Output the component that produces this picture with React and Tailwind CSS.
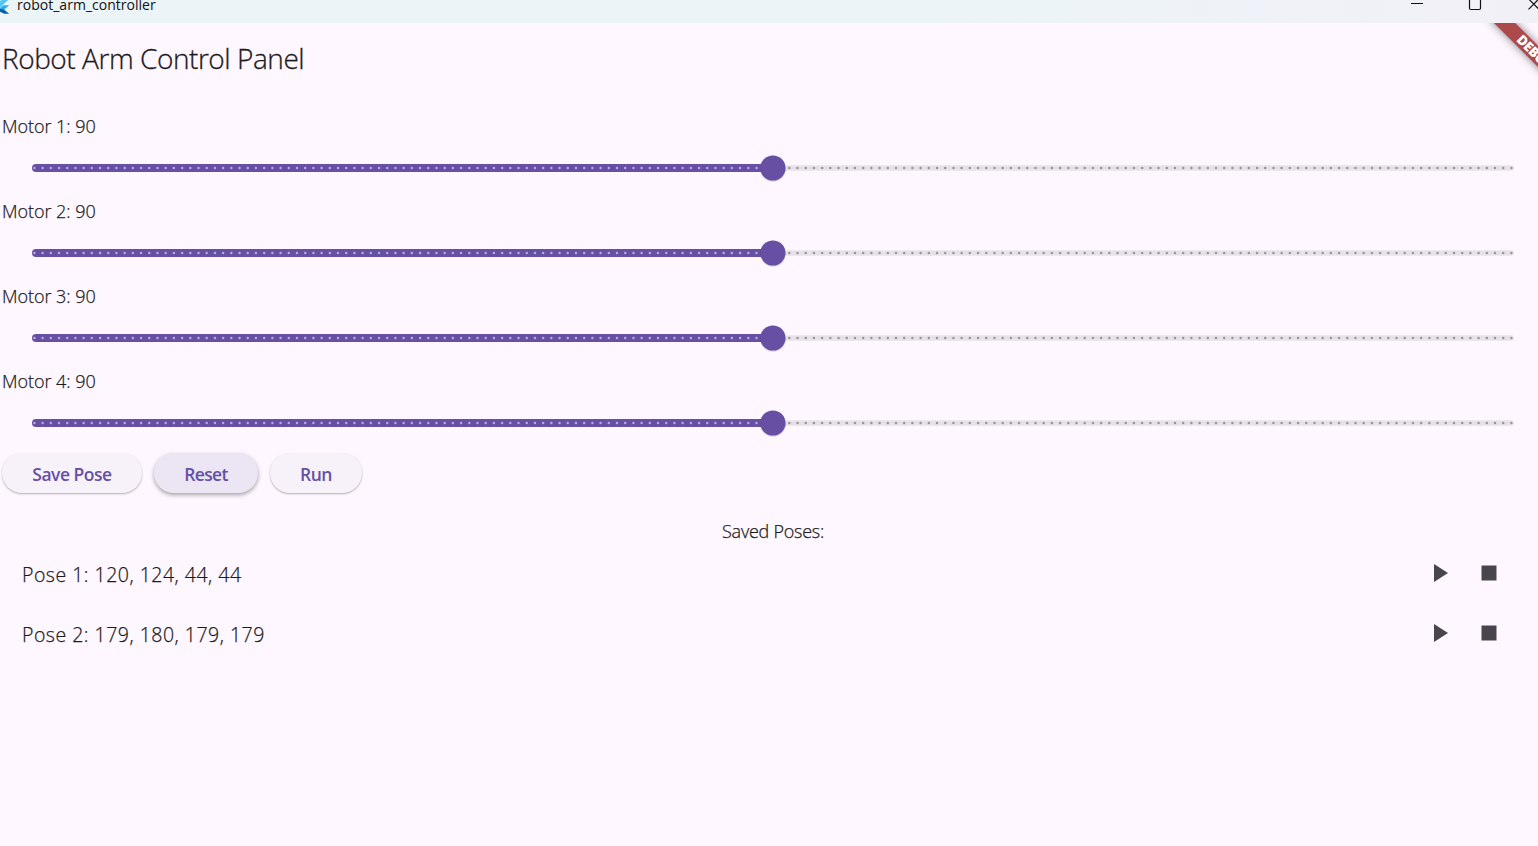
import React from 'react';

const TICKS = Array.from({ length: 181 }, (_, i) => i);

function FlutterLogo() {
  return (
    <svg className="block h-[14px] w-[10px] shrink-0" viewBox="0 0 10 14">
      <path d="M0 1 L1.5 0 H8.2 L0 7.6 Z" fill="#54c5f8" />
      <path d="M0 8 L3.4 5.2 H9.2 L4 9.7 L0 12.2 Z" fill="#35aae6" />
      <path d="M0 9 L4 9.5 L9.2 13.8 H4.2 L0 11.8 Z" fill="#0b5fa5" />
    </svg>
  );
}

function TitleBar() {
  return (
    <header className="flex h-[23px] items-start overflow-hidden bg-gradient-to-r from-[#ebf4f7] from-60% to-[#f2f0f7] to-100%">
      <FlutterLogo />
      <span className="ml-[7px] mt-[-5px] flex-1 whitespace-nowrap text-[14px] leading-[20px] tracking-[0.02px] text-[#111]">
        robot_arm_controller
      </span>
      <svg className="block h-[12px] w-[127px] shrink-0" viewBox="0 0 127 12" fill="none" stroke="#111">
        <path d="M0 3.5H12" />
        <path d="M58.5 -2V8.3Q58.5 9.5 59.7 9.5H68.3Q69.5 9.5 69.5 8.3V-2" strokeWidth="1.2" />
        <path d="M117.5 9.3L128 -1.2M117.5 -1.2L128 9.3" strokeWidth="1.2" />
      </svg>
    </header>
  );
}

function DebugBanner() {
  return (
    <div className="pointer-events-none absolute right-0 top-[23px] h-[90px] w-[90px] overflow-hidden">
      <div className="absolute left-[28.5px] top-[25px] flex h-[15.4px] w-[120px] rotate-45 items-center justify-center bg-[#ac4a4b] pr-[7px] text-center font-['Open_Sans'] text-[13.5px] font-extrabold leading-none tracking-[-0.4px] text-white shadow-[0_0_8px_rgba(0,0,0,0.5)]">
        DEBUG
      </div>
    </div>
  );
}

function Motor({ index, value }) {
  return (
    <section className="h-[85px]">
      <p className="h-[27px] pl-[2px] text-[18px] font-light leading-[27px] tracking-[-0.05px] [-webkit-text-stroke:0.25px_#1d1b20]">
        Motor {index}: {value}
      </p>
      <div className="relative ml-8 mt-[2px] flex h-[52px] w-[1482px] items-center">
        <div className="h-[7.5px] w-[741px] rounded-l-full bg-[#6750a4]" />
        <div className="h-[4px] w-[740px] rounded-r-full bg-[#e6e0e9] shadow-[0_0_0_1px_#eee8f1]" />
        <svg className="absolute left-0 top-[10px] h-[32px] w-[1482px]" viewBox="0 0 1482 32">
          {TICKS.map((t) => (
            <circle
              key={t}
              cx={2.4 + t * 8.2056}
              cy="15.9"
              r="1.25"
              fill={t < value ? '#b8a8dc' : '#98939d'}
            />
          ))}
          <circle cx="741" cy="17" r="12.7" fill="#000000" opacity="0.15" />
          <circle cx="740.9" cy="16" r="12.6" fill="#6750a4" />
        </svg>
      </div>
    </section>
  );
}

function PoseRow({ label }) {
  return (
    <li className="flex h-[60px] items-center pl-[22px] pr-[41px]">
      <span className="mt-[4px] flex-1 whitespace-nowrap text-[19.5px] font-light tracking-[0.5px] [-webkit-text-stroke:0.25px_#1d1b20]">
        {label}
      </span>
      <svg className="mr-[33px] block h-[18px] w-[14px]" viewBox="0 0 14 18">
        <path d="M0 0L14 9L0 18Z" fill="#49454f" />
      </svg>
      <svg className="block h-[16px] w-[16px]" viewBox="0 0 16 16">
        <path d="M0.5 0.5H15.5V15.5H0.5Z" fill="#49454f" />
      </svg>
    </li>
  );
}

export default function App() {
  return (
    <div className="relative h-[846px] w-[1538px] overflow-hidden bg-[#fef7ff] font-['Open_Sans','Noto_Sans',sans-serif] text-[#1d1b20]">
      <TitleBar />
      <DebugBanner />
      <main>
        <h1 className="h-[90px] whitespace-nowrap pl-[2px] pt-[15px] text-[28px] font-light leading-[40px] tracking-[-0.45px] [-webkit-text-stroke:0.3px_#1d1b20]">
          Robot Arm Control Panel
        </h1>
        {[1, 2, 3, 4].map((n) => (
          <Motor key={n} index={n} value={90} />
        ))}
        <div className="flex h-[40px] gap-[12px] pl-[2px] text-[17.5px] font-semibold text-[#6750a4]">
          <button className="h-[40px] w-[140px] whitespace-nowrap rounded-full bg-[#f7f2fa] pt-[3px] tracking-[-0.5px] shadow-[0_1px_2px_rgba(0,0,0,0.3)]">
            Save Pose
          </button>
          <button className="h-[40px] w-[104px] whitespace-nowrap rounded-full bg-[#ebe5f4] pt-[3px] tracking-[-0.7px] shadow-[0_2px_4px_rgba(0,0,0,0.35)]">
            Reset
          </button>
          <button className="h-[40px] w-[92px] whitespace-nowrap rounded-full bg-[#f7f2fa] pt-[3px] tracking-[-0.5px] shadow-[0_1px_2px_rgba(0,0,0,0.3)]">
            Run
          </button>
        </div>
        <h2 className="h-[50px] pl-[8px] pt-[25px] text-center text-[18px] font-light leading-[27px] tracking-[-0.25px] [-webkit-text-stroke:0.25px_#1d1b20]">
          Saved Poses:
        </h2>
        <ul>
          <PoseRow label="Pose 1: 120, 124, 44, 44" />
          <PoseRow label="Pose 2: 179, 180, 179, 179" />
        </ul>
      </main>
    </div>
  );
}
